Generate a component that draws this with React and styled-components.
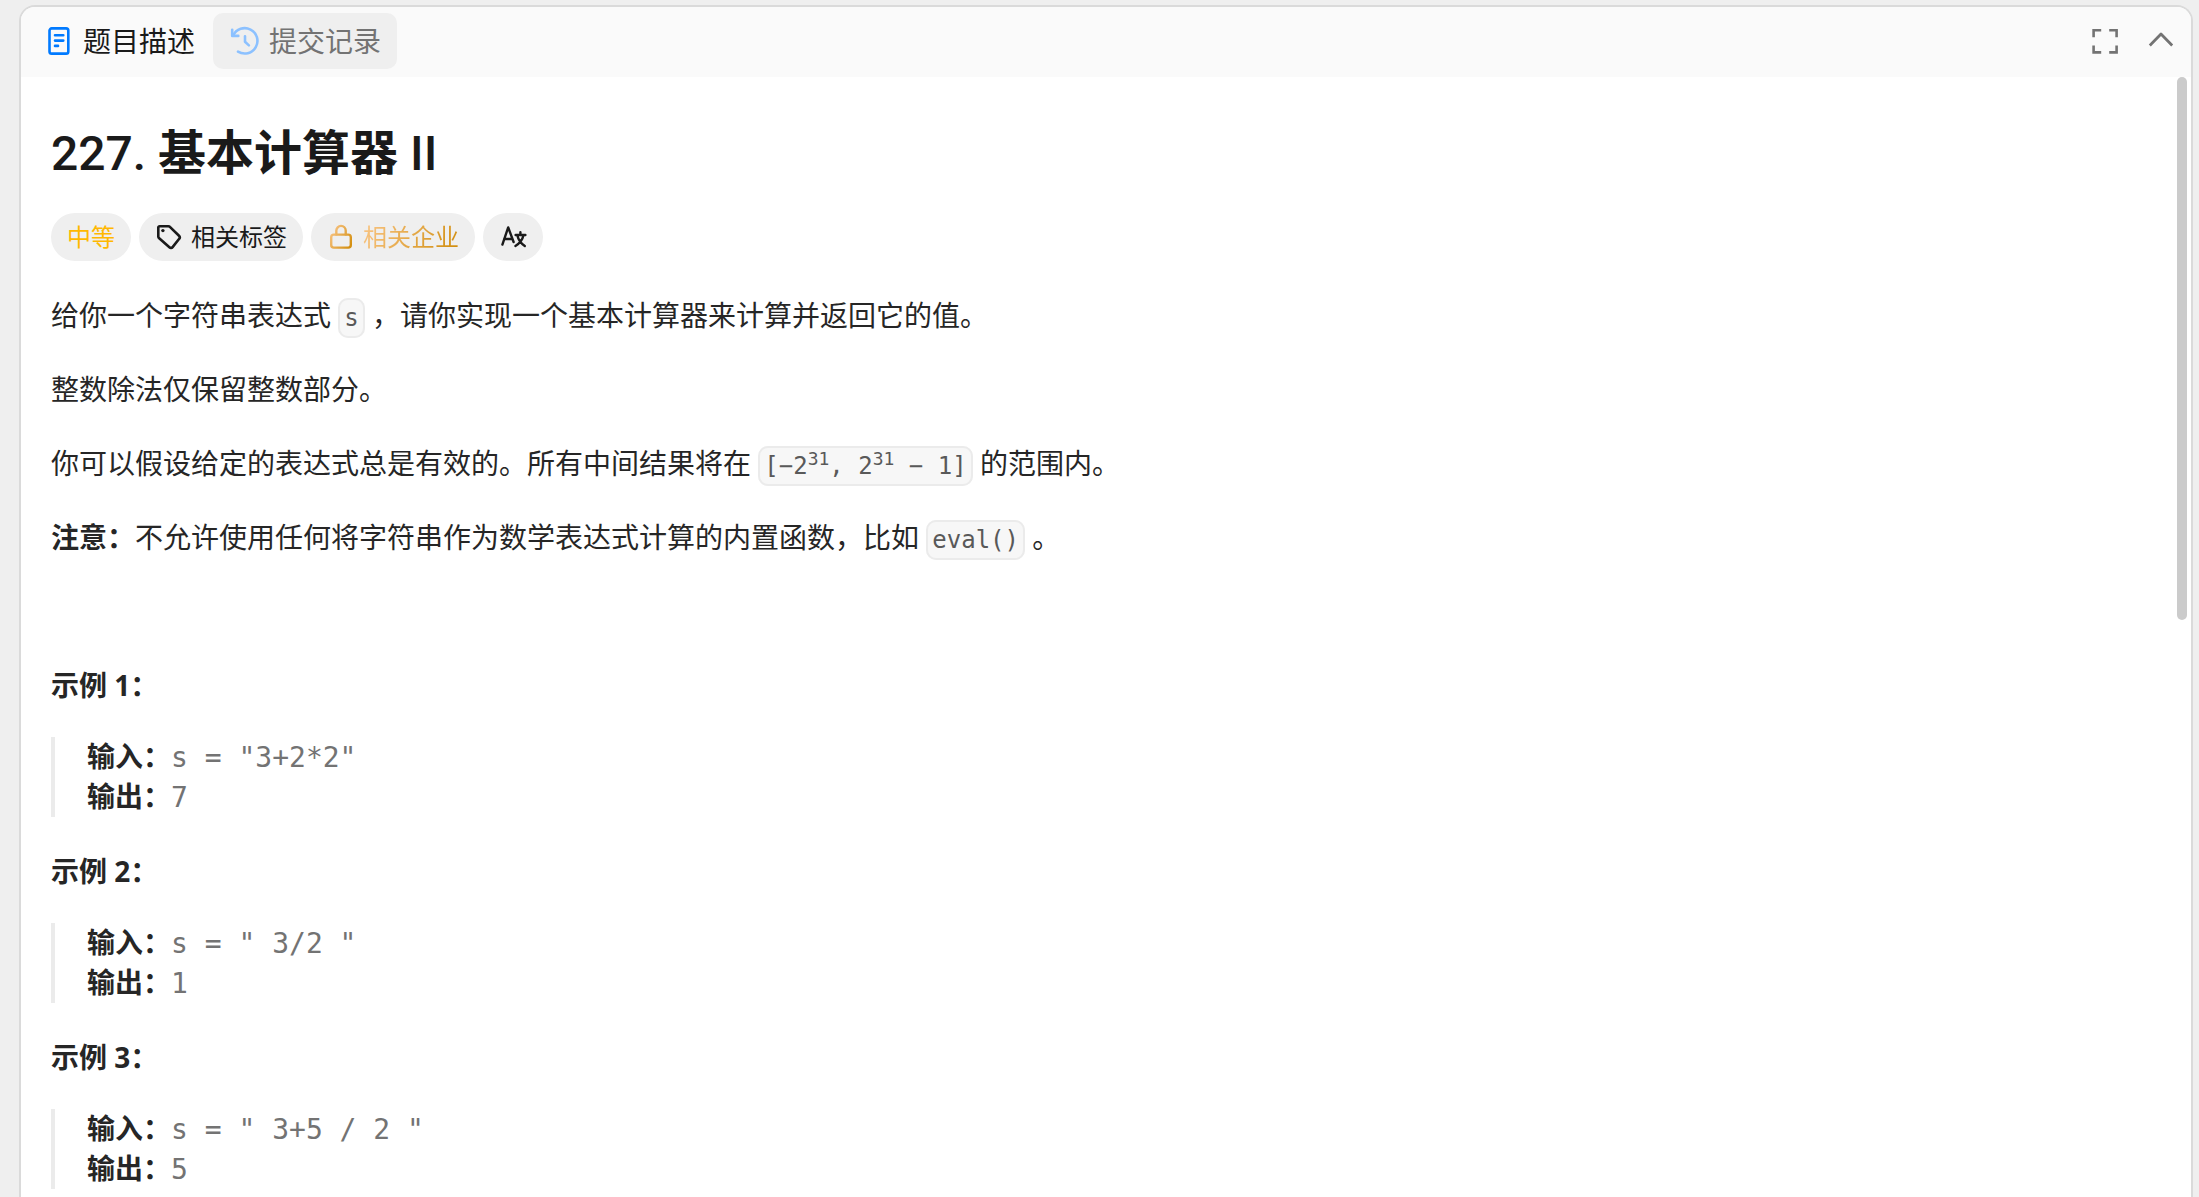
import React from "react";
import styled, { createGlobalStyle } from "styled-components";

const sans = `"Open Sans", "Noto Sans CJK SC", sans-serif`;
const display = `Roboto, "Noto Sans CJK SC", sans-serif`;
const mono = `"DejaVu Sans Mono", "Noto Sans CJK SC", monospace`;

const GlobalStyle = createGlobalStyle`
  *, *::before, *::after { box-sizing: border-box; }
  body { margin: 0; background: #efefef; font-family: ${sans}; color: #262626; }
  button { font: inherit; color: inherit; border: 0; background: none; padding: 0; cursor: pointer; }
`;

const Page = styled.div`
  display: flex;
  height: 100vh;
  padding: 5px 6px 0 19px;
`;

const Panel = styled.section`
  flex: 1;
  min-width: 0;
  display: flex;
  flex-direction: column;
  overflow: hidden;
  background: #fff;
  border: 2px solid #dadada;
  border-bottom: 0;
  border-radius: 16px 16px 0 0;
`;

const TabBar = styled.header`
  display: flex;
  align-items: center;
  justify-content: space-between;
  padding: 6px 14px 8px 6px;
  background: #fafafa;
`;

const Tabs = styled.div`
  display: flex;
  gap: 2px;
`;

const Tab = styled.button`
  display: flex;
  align-items: center;
  gap: 8px;
  height: 56px;
  padding: 0 16px;
  border-radius: 10px;
  font-size: 28px;
  line-height: 40px;
  white-space: nowrap;
  color: ${(p) => (p.$active ? "#1a1a1a" : "#737373")};
  background: ${(p) => (p.$active ? "transparent" : "#efefef")};
`;

const Tools = styled.div`
  display: flex;
  gap: 24px;
  color: #737373;
`;

const ToolButton = styled.button`
  display: flex;
`;

const Body = styled.div`
  flex: 1;
  min-height: 0;
  display: flex;
  padding-right: 4px;
`;

const Content = styled.article`
  flex: 1;
  min-width: 0;
  padding: 42px 30px 0;
  overflow-y: auto;
  scrollbar-width: none;
`;

const ScrollTrack = styled.div`
  width: 10px;
`;

const ScrollThumb = styled.div`
  height: 543px;
  max-height: 100%;
  border-radius: 5px;
  background: #cbcbcb;
`;

const Title = styled.h1`
  margin: 0 0 24px;
  font-family: ${display};
  font-size: 48px;
  line-height: 70px;
  font-weight: 500;
  color: #1a1a1a;

  b {
    font-weight: 700;
  }
`;

const Tags = styled.div`
  display: flex;
  flex-wrap: wrap;
  gap: 8px;
  margin-bottom: 32px;
`;

const Pill = styled.button`
  display: flex;
  align-items: center;
  gap: 8px;
  height: 48px;
  padding: 0 16px;
  border-radius: 24px;
  background: #efefef;
  font-size: 24px;
  line-height: 32px;
  color: #1a1a1a;
`;

const Level = styled(Pill).attrs({ as: "div" })`
  color: #ffb800;
`;

const GoldText = styled.span`
  color: transparent;
  background: linear-gradient(120deg, #fac686, #cf8b0a);
  background-clip: text;
`;

const Paragraph = styled.p`
  margin: 0 0 30px;
  font-size: 28px;
  line-height: 44px;
`;

const Code = styled.code`
  padding: 4px;
  border: 2px solid #ebebeb;
  border-radius: 10px;
  background: #f7f7f7;
  color: #595959;
  font-family: ${mono};
  font-size: 24px;
  line-height: 30px;
  white-space: nowrap;

  sup {
    font-size: 18px;
    line-height: 0;
  }
`;

const Sample = styled.pre`
  margin: 0 0 32px;
  padding-left: 32px;
  border-left: 4px solid #ebebeb;
  font-family: ${mono};
  font-size: 28px;
  line-height: 38px;
  color: #737373;
`;

const SampleLine = styled.div`
  height: 40px;
`;

const Label = styled.strong`
  font-family: ${sans};
  color: #262626;
`;

const Icon = ({ size = 32, children, width = 2.6 }) => (
  <svg
    width={size}
    height={size}
    viewBox={`0 0 ${size} ${size}`}
    fill="none"
    stroke="currentColor"
    strokeWidth={width}
    strokeLinecap="round"
    strokeLinejoin="round"
    aria-hidden="true"
  >
    {children}
  </svg>
);

const DocIcon = () => (
  <Icon>
    <g stroke="#007aff">
      <rect x="6.5" y="3.4" width="18.8" height="25.2" rx="2.2" />
      <path d="M12 10.3h8.3M12 15.6h8.3M12 20.9h3" />
    </g>
  </Icon>
);

const HistoryIcon = () => (
  <Icon>
    <g stroke="#8cc1ff">
      <path d="M3.2 4.8v6.1h6.1" />
      <path d="M4.2 10.5A12.7 12.7 0 1 1 9 26.6" />
      <path d="M16 11.2v5.6l3.9 3.6" />
    </g>
  </Icon>
);

const ExpandIcon = () => (
  <Icon>
    <path
      strokeLinecap="butt"
      strokeLinejoin="miter"
      d="M4.6 12.2V5.2h7.6M20.2 5.2h7.4v7M27.6 20.4v7h-7.4M12.2 27.4H4.6v-7"
    />
  </Icon>
);

const ChevronIcon = () => (
  <Icon width={2.8}>
    <path strokeLinecap="butt" d="M4.8 20.4 16 9l11.2 11.4" />
  </Icon>
);

const TagIcon = () => (
  <Icon size={28}>
    <path d="M4.6 3.2h8.7c.6 0 1.2.2 1.6.7l9.1 8.8c.9.9 1 2.2.2 3.1l-6.6 8.3c-.8 1-2.3 1-3.2.2L3.9 15.1c-.4-.4-.6-.9-.6-1.5V4.5c0-.7.6-1.3 1.3-1.3z" />
    <circle cx="7.9" cy="7.6" r="1.7" fill="currentColor" stroke="none" />
  </Icon>
);

const LockIcon = () => (
  <Icon size={28} width={2.4}>
    <defs>
      <linearGradient id="gold" gradientUnits="userSpaceOnUse" x1="4" y1="10" x2="24" y2="22">
        <stop stopColor="#f5c07c" />
        <stop offset="1" stopColor="#d48f10" />
      </linearGradient>
    </defs>
    <g stroke="url(#gold)">
      <rect x="4.2" y="11.6" width="19.6" height="13" rx="2.6" />
      <path d="M9.3 11.4V7.6a4.7 4.7 0 0 1 9.4 0v3.8" />
    </g>
  </Icon>
);

const TranslateIcon = () => (
  <Icon size={28} width={2.4}>
    <path d="M3.4 21.6 9.2 4.4 14.6 19M5.2 16h7.2" />
    <path d="M21.4 9.2v2.6M16.6 12h9.8M18.4 12.6c1 4.6 3.6 8 7.4 10.4M24.4 12.6c-1 4.6-4 8-8 10.4" />
  </Icon>
);

const samples = [
  { input: 's = "3+2*2"', output: "7" },
  { input: 's = " 3/2 "', output: "1" },
  { input: 's = " 3+5 / 2 "', output: "5" },
];

export default function App() {
  return (
    <>
      <GlobalStyle />
      <Page>
        <Panel>
          <TabBar>
            <Tabs>
              <Tab $active>
                <DocIcon />
                题目描述
              </Tab>
              <Tab>
                <HistoryIcon />
                提交记录
              </Tab>
            </Tabs>
            <Tools>
              <ToolButton aria-label="全屏">
                <ExpandIcon />
              </ToolButton>
              <ToolButton aria-label="收起">
                <ChevronIcon />
              </ToolButton>
            </Tools>
          </TabBar>
          <Body>
            <Content>
              <Title>
                227. <b>基本计算器</b> II
              </Title>
              <Tags>
                <Level>中等</Level>
                <Pill>
                  <TagIcon />
                  相关标签
                </Pill>
                <Pill>
                  <LockIcon />
                  <GoldText>相关企业</GoldText>
                </Pill>
                <Pill aria-label="切换语言">
                  <TranslateIcon />
                </Pill>
              </Tags>
              <Paragraph>
                给你一个字符串表达式 <Code>s</Code> ，请你实现一个基本计算器来计算并返回它的值。
              </Paragraph>
              <Paragraph>整数除法仅保留整数部分。</Paragraph>
              <Paragraph>
                你可以假设给定的表达式总是有效的。所有中间结果将在{" "}
                <Code>
                  [−2<sup>31</sup>, 2<sup>31</sup> − 1]
                </Code>{" "}
                的范围内。
              </Paragraph>
              <Paragraph>
                <strong>注意：</strong>不允许使用任何将字符串作为数学表达式计算的内置函数，比如{" "}
                <Code>eval()</Code> 。
              </Paragraph>
              <Paragraph>&nbsp;</Paragraph>
              {samples.map((sample, i) => (
                <React.Fragment key={sample.input}>
                  <Paragraph>
                    <strong>示例 {i + 1}：</strong>
                  </Paragraph>
                  <Sample>
                    <SampleLine>
                      <Label>输入：</Label>
                      {sample.input}
                    </SampleLine>
                    <SampleLine>
                      <Label>输出：</Label>
                      {sample.output}
                    </SampleLine>
                  </Sample>
                </React.Fragment>
              ))}
            </Content>
            <ScrollTrack>
              <ScrollThumb />
            </ScrollTrack>
          </Body>
        </Panel>
      </Page>
    </>
  );
}
